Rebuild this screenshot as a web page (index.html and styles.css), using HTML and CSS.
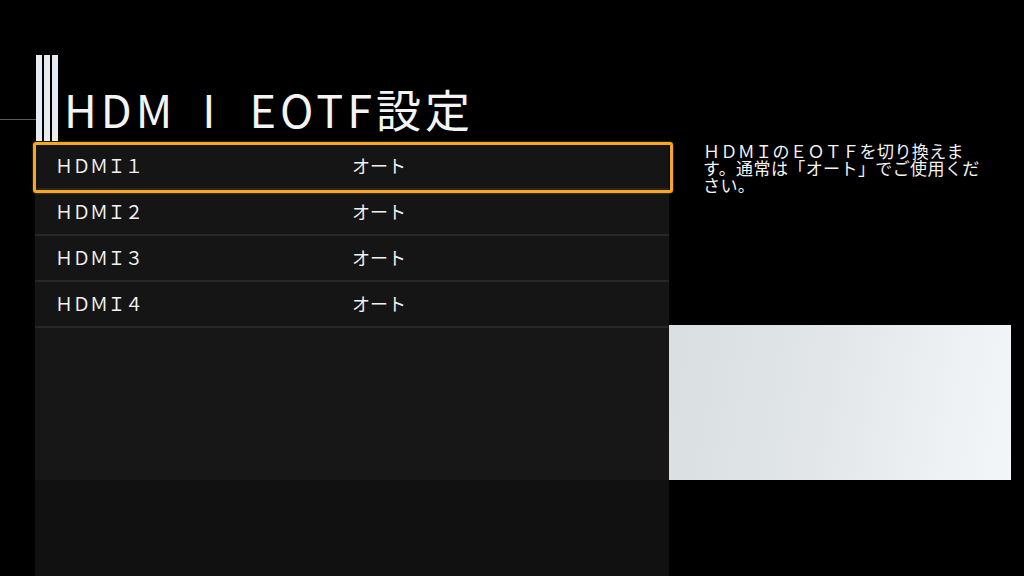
FILE: index.html
```html
<!DOCTYPE html>
<html lang="ja">
<head>
<meta charset="utf-8">
<title>HDMI EOTF設定</title>
<link rel="stylesheet" href="styles.css">
</head>
<body>
<div class="screen">
  <header class="header">
    <div class="rule"></div>
    <div class="bars"><span class="bar"></span><span class="bar"></span><span class="bar"></span></div>
    <h1 class="title">HDM<span class="wide-i">I</span> EOTF設定</h1>
  </header>
  <main class="main">
    <section class="panel">
      <ul class="list">
        <li class="row is-focused"><span class="label">ＨＤＭＩ１</span><span class="value">オート</span></li>
        <li class="row"><span class="label">ＨＤＭＩ２</span><span class="value">オート</span></li>
        <li class="row"><span class="label">ＨＤＭＩ３</span><span class="value">オート</span></li>
        <li class="row"><span class="label">ＨＤＭＩ４</span><span class="value">オート</span></li>
      </ul>
      <div class="panel-fill"></div>
      <div class="panel-foot"></div>
    </section>
    <aside class="side">
      <p class="desc">ＨＤＭＩのＥＯＴＦを切り換えます。通常は「オート」でご使用ください。</p>
      <div class="preview"></div>
    </aside>
  </main>
</div>
</body>
</html>
```

FILE: styles.css
```css
* { box-sizing: border-box; }
html, body { margin: 0; padding: 0; }
body {
  width: 1024px;
  height: 576px;
  overflow: hidden;
  background: #000;
  color: #f2f2f2;
  font-family: "Noto Sans CJK JP", "Noto Sans", sans-serif;
}
.screen {
  display: flex;
  flex-direction: column;
  height: 576px;
}
.header {
  height: 142px;
  display: flex;
  align-items: flex-start;
}
.rule {
  width: 36px;
  height: 1px;
  margin-top: 119px;
  background: #5a5a5a;
}
.bars {
  display: flex;
  gap: 2px;
  margin-top: 55px;
  height: 86px;
}
.bar {
  width: 6px;
  height: 100%;
  background: #e6edf2;
}
.title {
  margin: 77px 0 0 6px;
  font-size: 45px;
  font-weight: 400;
  line-height: 64px;
  letter-spacing: 4px;
  white-space: nowrap;
  color: #f4f4f4;
}
.wide-i {
  margin: 0 16px 0 26px;
}
.main {
  flex: 1;
  display: flex;
}
.panel {
  width: 634px;
  margin-left: 35px;
  display: flex;
  flex-direction: column;
  background: #111;
  padding-top: 2px;
}
.list {
  list-style: none;
  margin: 0;
  padding: 0;
  background: #151515;
}
.row {
  position: relative;
  height: 46px;
  display: flex;
  align-items: center;
  padding: 0 0 2px 20px;
  border-bottom: 2px solid #272727;
  font-size: 18px;
  letter-spacing: -0.5px;
}
.row.is-focused::after {
  content: "";
  position: absolute;
  top: -2px;
  left: -2px;
  right: -4px;
  bottom: -5px;
  border: 3px solid #f7a823;
  border-radius: 3px;
  box-shadow: 0 0 2px rgba(255, 170, 40, 0.6);
}
.label {
  width: 297px;
}
.value {
  letter-spacing: 0;
}
.panel-fill {
  height: 152px;
  background: #171717;
}
.panel-foot {
  flex: 1;
  background: #111;
}
.side {
  flex: 1;
  display: flex;
  flex-direction: column;
}
.desc {
  margin: 0 0 0 34px;
  width: 286px;
  font-size: 17px;
  line-height: 17px;
  letter-spacing: 0.4px;
  color: #f4f4f4;
}
.preview {
  margin-top: 132px;
  width: 342px;
  height: 155px;
  background: linear-gradient(100deg, #d9dee1 0%, #e2e6e9 45%, #edf1f4 80%, #f3f6f9 100%);
}
```
